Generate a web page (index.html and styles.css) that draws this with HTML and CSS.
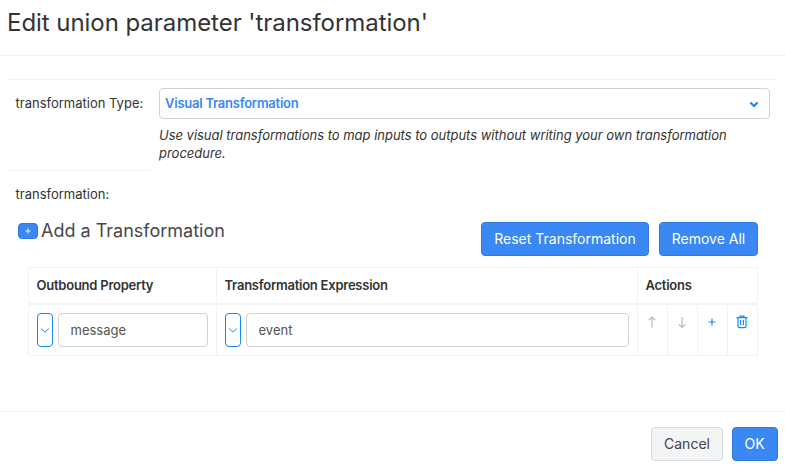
FILE: index.html
```html
<!DOCTYPE html>
<html lang="en">
<head>
<meta charset="utf-8">
<title>Edit union parameter</title>
<link rel="stylesheet" href="styles.css">
</head>
<body>
<div class="dialog">
  <header class="header"><h1 class="title">Edit union parameter 'transformation'</h1></header>
  <main class="body">
    <div class="field">
      <label class="label">transformation Type:</label>
      <div class="control">
        <div class="select">
          <span class="select-value">Visual Transformation</span>
          <svg class="select-caret" width="10" height="7" viewBox="0 0 10 7"><path d="M1.400 1.500 5 5l3.600-3.500" fill="none" stroke="#1787fb" stroke-width="2.100"/></svg>
        </div>
        <p class="help">Use visual transformations to map inputs to outputs without writing your own transformation procedure.</p>
      </div>
    </div>
    <div class="divider"></div>
    <div class="sub-label">transformation:</div>
    <div class="toolbar">
      <button class="add"><svg width="6" height="6" viewBox="0 0 6 6"><path d="M3 .3v5.400M.3 3h5.400" stroke="#fff" stroke-width=".9"/></svg></button>
      <span class="add-text">Add a Transformation</span>
      <button class="btn primary reset">Reset Transformation</button>
      <button class="btn primary remove">Remove All</button>
    </div>
    <div class="table">
      <div class="row head">
        <div class="cell">Outbound Property</div>
        <div class="cell">Transformation Expression</div>
        <div class="cell actions-title">Actions</div>
      </div>
      <div class="row">
        <div class="cell inputs">
          <button class="drop"><svg width="10" height="7" viewBox="0 0 10 7"><path d="m1.200 1.500 3.800 3.700 3.800-3.700" fill="none" stroke="#1787fb"/></svg></button>
          <input class="input" value="message">
        </div>
        <div class="cell inputs">
          <button class="drop"><svg width="10" height="7" viewBox="0 0 10 7"><path d="m1.200 1.500 3.800 3.700 3.800-3.700" fill="none" stroke="#1787fb"/></svg></button>
          <input class="input" value="event">
        </div>
        <div class="cell action"><svg width="14" height="14" viewBox="0 0 14 14"><path d="M7 12.500V2M3.800 5.200 7 2l3.200 3.200" fill="none" stroke="#b4b6bd" stroke-width="1.200"/></svg></div>
        <div class="cell action"><svg width="14" height="14" viewBox="0 0 14 14"><path d="M7 2v10.500M3.800 9.300 7 12.500l3.200-3.200" fill="none" stroke="#b4b6bd" stroke-width="1.200"/></svg></div>
        <div class="cell action"><svg width="14" height="14" viewBox="0 0 14 14"><path d="M7 3.500v7M3.500 7h7" fill="none" stroke="#1787fb" stroke-width="1.200"/></svg></div>
        <div class="cell action"><svg width="14" height="14" viewBox="0 0 14 14"><path d="M1.500 2.700h11M5 2.500V1.200h4v1.300M3 2.700v8.500q0 1.500 1.500 1.500h5q1.500 0 1.500-1.500V2.700M5.600 5v5.200M8.400 5v5.200" fill="none" stroke="#1787fb" stroke-width="1.200"/></svg></div>
      </div>
    </div>
  </main>
  <footer class="footer">
    <button class="btn cancel">Cancel</button>
    <button class="btn primary ok">OK</button>
  </footer>
</div>
</body>
</html>
```
FILE: styles.css
```css
* { box-sizing: border-box; }
body { margin: 0; background: #fff; color: #333; font-family: Inter, "Liberation Sans", sans-serif; font-size: 13px; overflow: hidden; }
.dialog { display: flex; flex-direction: column; height: 467px; }
button, input { font-family: inherit; margin: 0; padding: 0; }
svg { display: block; }
.header { height: 56px; padding: 7px 7px 0; border-bottom: 1px solid #f2f2f3; }
.title { margin: 0; font-size: 24px; line-height: 32px; font-weight: 400; letter-spacing: -.05px; white-space: nowrap; }
.body { flex: 1; padding: 23px 7px 0 8px; }
.field { display: flex; border-top: 1px solid #f2f2f3; padding: 8px 8px 0 7.5px; height: 91px; }
.label { width: 143.5px; padding-top: 6px; line-height: 18px; white-space: nowrap; }
.control { flex: 1; }
.select { display: flex; align-items: center; justify-content: space-between; height: 31px; border: 1px solid #d0d1d9; border-radius: 4px; padding: 0 10px 0 5px; }
.select-value { margin-top: -2px; color: #3a88f3; font-weight: 600; letter-spacing: -.24px; }
.select-caret { margin-top: 2px; }
.help { margin: 7px 0 0; line-height: 18px; font-style: italic; letter-spacing: -.015px; }
.divider { width: 143px; border-top: 1px solid #f2f2f3; }
.sub-label { padding: 14px 7.5px 1px; line-height: 18px; }
.toolbar { display: flex; padding: 18px 20px 0 10px; height: 63px; }
.add { display: flex; align-items: center; justify-content: center; width: 20px; height: 16px; margin-top: 1px; border: 1px solid #3079df; border-radius: 4px; background: #3a88f3; }
.add-text { flex: 1; margin: -3px 0 0 3px; font-size: 18px; line-height: 24px; color: #484848; white-space: nowrap; }
.btn { height: 34px; padding-bottom: 2px; border: 1px solid #d7dade; border-radius: 4px; background: #f3f4f6; color: #444; font-size: 14px; }
.primary { border-color: #3079df; background: #3a88f3; color: #fff; }
.reset { width: 168px; }
.remove { width: 99px; margin-left: 10px; }
.table { width: 730px; margin-left: 20px; border: 1px solid #f3f3f4; }
.row { display: grid; grid-template-columns: 188px 421px 30px 30px 30px 29px; height: 50px; }
.head { height: 37px; border-bottom: 2px solid #f3f3f4; font-weight: 600; letter-spacing: -.24px; line-height: 35px; }
.cell { padding: 0 8px 0 7.500px; border-right: 1px solid #f3f3f4; }
.cell:last-child { border-right: 0; }
.actions-title { grid-column: 3 / 7; }
.inputs { display: flex; padding: 8px; gap: 5px; }
.drop { display: flex; align-items: center; justify-content: center; flex: none; width: 16px; height: 34px; border: 1px solid #1787fb; border-radius: 4px; background: #fff; }
.drop svg { flex: none; margin-left: -1px; }
.input { flex: 1; min-width: 0; height: 34px; padding: 0 12px 0 11.500px; border: 1px solid #d0d1d9; border-radius: 4px; color: #555; font-size: 13px; }
.action { display: flex; justify-content: center; padding: 10px 1px 0 0; }
.footer { display: flex; justify-content: flex-end; height: 56px; gap: 9px; padding: 15px 7px 0; border-top: 1px solid #f2f2f3; }
.cancel { width: 72px; }
.ok { width: 46px; padding-right: 1px; }
```
